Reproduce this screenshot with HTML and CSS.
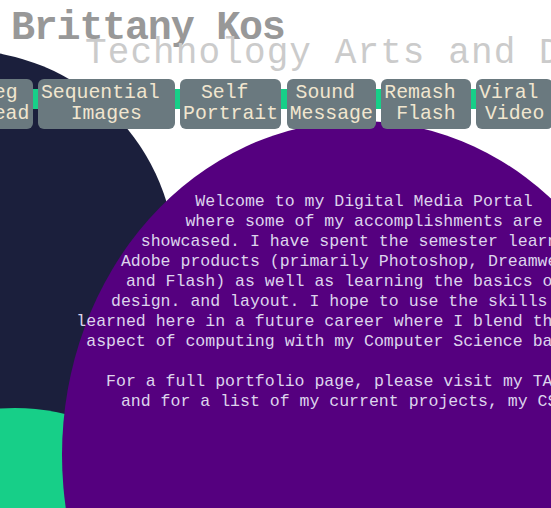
FILE: index.html
```html
<!DOCTYPE html>
<html lang="en">
<head>
<meta charset="utf-8">
<title>Brittany Kos - Digital Media Portal</title>
<link rel="stylesheet" href="styles.css">
</head>
<body>
<div class="backdrop" aria-hidden="true">
  <div class="blob blob-navy"></div>
  <div class="blob blob-green"></div>
  <div class="blob blob-purple"></div>
</div>

<header class="masthead">
  <h1 class="name">Brittany Kos</h1>
  <p class="subtitle">Technology Arts and Design</p>
</header>

<nav class="nav">
  <a class="nav-btn" href="#">Jpeg<br>Spread</a>
  <a class="nav-btn" href="#">Sequential&nbsp;<br>Images</a>
  <a class="nav-btn" href="#">Self&nbsp;<br>Portrait</a>
  <a class="nav-btn" href="#">Sound&nbsp;<br>Message</a>
  <a class="nav-btn" href="#">Remash&nbsp;<br>Flash</a>
  <a class="nav-btn" href="#">Viral&nbsp;<br>Video</a>
</nav>

<main class="intro">
  <p>Welcome to my Digital Media Portal<br>
  where some of my accomplishments are<br>
  showcased. I have spent the semester learning<br>
  Adobe products (primarily Photoshop, Dreamweaver,<br>
  and Flash) as well as learning the basics of web<br>
  design. and layout. I hope to use the skills I have<br>
  learned here in a future career where I blend the artistic<br>
  aspect of computing with my Computer Science background.</p>
  <p>For a full portfolio page, please visit my TAD page,<br>
  and for a list of my current projects, my CS page</p>
</main>
</body>
</html>
```

FILE: styles.css
```css
html, body {
  margin: 0;
  padding: 0;
  overflow: hidden;
  background: #ffffff;
}

body {
  position: relative;
  width: 551px;
  height: 508px;
  font-family: "Liberation Mono", "Courier New", monospace;
}

/* decorative circles */
.backdrop {
  position: absolute;
  inset: 0;
  z-index: 0;
  overflow: hidden;
}

.blob {
  position: absolute;
  border-radius: 50%;
}

.blob-navy {
  left: -254px;
  top: 50px;
  width: 430px;
  height: 430px;
  background: #1b1f3c;
}

.blob-green {
  left: -195px;
  top: 408px;
  width: 420px;
  height: 420px;
  background: #17cf88;
}

.blob-purple {
  left: 62px;
  top: 121px;
  width: 596px;
  height: 668px;
  background: #55007f;
}

/* header */
.masthead {
  position: relative;
  z-index: 1;
  padding-top: 14.6px;
  padding-left: 11px;
  white-space: nowrap;
}

.name {
  margin: 0;
  font-size: 40px;
  line-height: 28px;
  letter-spacing: -1.2px;
  font-weight: bold;
  color: #989898;
}

.subtitle {
  margin: 0 0 0 74px;
  font-size: 36px;
  line-height: 21.5px;
  letter-spacing: 1.1px;
  color: #cbcbcb;
}

/* navigation */
.nav {
  position: relative;
  z-index: 1;
  display: flex;
  gap: 5.3px;
  margin-top: 14.8px;
  margin-left: -45px;
  width: max-content;
  background: linear-gradient(to bottom,
    transparent 10px, #17cf88 10px, #17cf88 30px, transparent 30px);
}

.nav-btn {
  flex: none;
  display: block;
  padding: 3.9px 3.15px 4.1px;
  background: #6a797f;
  border-radius: 6px;
  color: #f1e6cf;
  font-size: 19.8px;
  line-height: 21px;
  text-align: center;
  text-decoration: none;
  white-space: nowrap;
}

/* intro text */
.intro {
  position: relative;
  z-index: 1;
  width: 600px;
  margin: 63.6px 0 0 64px;
  color: #ddd4ec;
  font-size: 16.55px;
  line-height: 20px;
  text-align: center;
  white-space: nowrap;
}

.intro p {
  margin: 0 0 20px;
}
```
